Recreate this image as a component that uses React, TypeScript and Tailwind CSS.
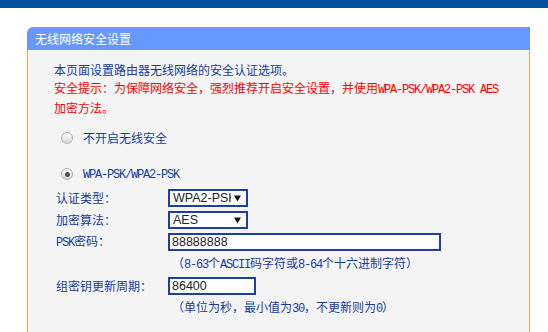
const cjk = "font-['SimSun','Noto_Sans_CJK_SC',sans-serif]";

// ASCII runs rendered narrow like the bitmap SimSun half-width glyphs
function Mixed({ text }: { text: string }) {
  const parts = text.split(/([\x20-\x7e]+)/);
  return (
    <span>
      {parts.map((p, i) =>
        p === "" ? null : /^[\x20-\x7e]+$/.test(p) ? (
          <span key={i} className="whitespace-pre font-['Liberation_Mono',monospace] tracking-[-1.2px] text-[12px]">
            {p}
          </span>
        ) : (
          <span key={i}>{p}</span>
        )
      )}
    </span>
  );
}

function Radio({ checked }: { checked?: boolean }) {
  return (
    <span className="flex h-[12px] w-[12px] items-center justify-center rounded-full border border-[#b4b4b4] bg-gradient-to-b from-[#fdfdfd] to-[#d8d8d8]">
      {checked && <span className="h-[5px] w-[5px] rounded-full bg-[#555]" />}
    </span>
  );
}

function Select({ value }: { value: string }) {
  return (
    <div className="flex h-[18px] w-[80px] items-center border-2 border-[#1d3fa3] bg-white pl-[3px] pr-[5px]">
      <span className="flex-1 overflow-hidden whitespace-nowrap font-['Liberation_Sans',Arial,sans-serif] text-[12.5px] leading-[14px] text-[#222]">
        {value}
      </span>
      <svg width="7" height="7" viewBox="0 0 7 7" className="ml-[3px] shrink-0">
        <path d="M0 0.5 L7 0.5 L3.5 6.5 Z" fill="#111" />
      </svg>
    </div>
  );
}

function Input({ value, width }: { value: string; width: string }) {
  return (
    <div className={`flex h-[18px] items-center border-2 border-[#1d3fa3] bg-white pl-[2px] ${width}`}>
      <span className="font-['Liberation_Sans',Arial,sans-serif] text-[12.5px] leading-[14px] text-[#222]">{value}</span>
    </div>
  );
}

export default function App() {
  return (
    <div className={`h-[332px] w-[548px] overflow-hidden bg-white ${cjk} text-[12px] text-[#163c9c]`}>
      <div className="h-[8px] bg-[#0050a0]" />
      <div className="ml-[27px] mt-[19px] w-[503px]">
        <div className="h-[23px] rounded-tl-[6px] bg-[#6699ff] pl-[8px] text-[12px] leading-[24px] text-white">
          无线网络安全设置
        </div>
        <div className="h-[290px] border-x border-[#f5a048] bg-[#f4f4f4] pl-[26px] pt-[11px]">
          <div className="leading-[18px]">
            <p>本页面设置路由器无线网络的安全认证选项。</p>
            <p className="text-[#ff0000]">
              <Mixed text="安全提示：为保障网络安全，强烈推荐开启安全设置，并使用WPA-PSK/WPA2-PSK AES" />
              <br />
              加密方法。
            </p>
          </div>

          <div className="mt-[12px] flex h-[18px] items-center gap-[10px] pl-[7px]">
            <Radio />
            <span>不开启无线安全</span>
          </div>
          <div className="mt-[18px] flex h-[18px] items-center gap-[10px] pl-[7px]">
            <Radio checked />
            <Mixed text="WPA-PSK/WPA2-PSK" />
          </div>

          <div className="mt-[4px] grid grid-cols-[112px_1fr] auto-rows-[22px] items-center pl-[2px]">
            <span>认证类型：</span>
            <Select value="WPA2-PSK" />
            <span>加密算法：</span>
            <Select value="AES" />
            <span>
              <Mixed text="PSK" />密码：
            </span>
            <Input value="88888888" width="w-[273px]" />
            <span className="col-start-2 pl-[4px]">
              <Mixed text="（8-63个ASCII码字符或8-64个十六进制字符）" />
            </span>
            <span>组密钥更新周期：</span>
            <Input value="86400" width="w-[88px]" />
            <span className="col-start-2 pl-[4px]">
              <Mixed text="（单位为秒，最小值为30，不更新则为0）" />
            </span>
          </div>
        </div>
      </div>
    </div>
  );
}
